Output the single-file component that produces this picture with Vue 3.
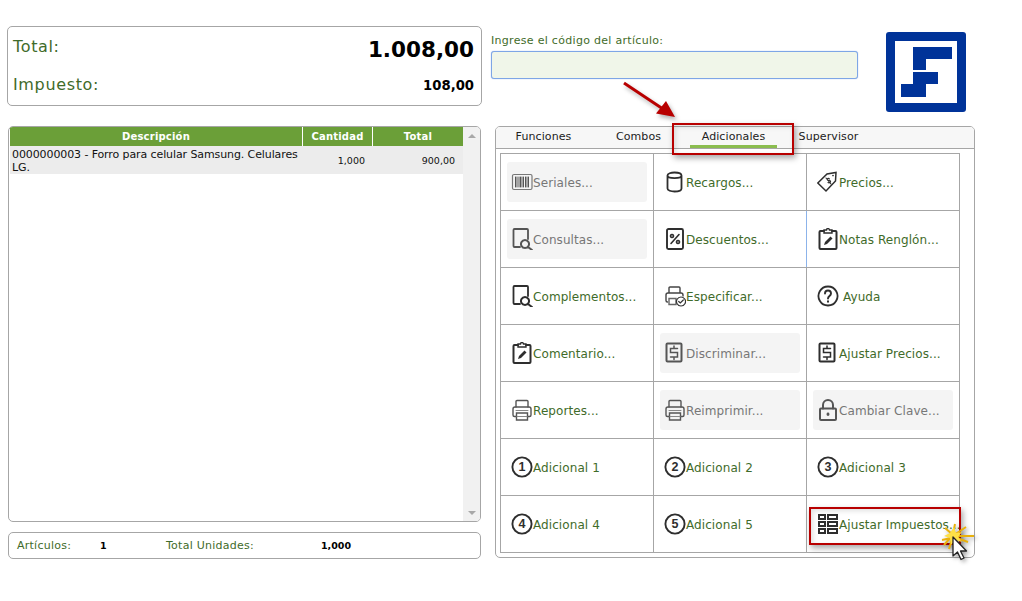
<script setup>
const icons = {
  barcode: [
    { d: 'M3 3.500h16.500a1.500 1.500 0 0 1 1.500 1.500v12a1.500 1.500 0 0 1-1.500 1.500H3A1.500 1.500 0 0 1 1.500 17V5A1.500 1.500 0 0 1 3 3.500z', w: 1.200, c: '#777' },
    { d: 'M4.500 6v10M6 6v10M8 6v10M9.500 6v10M11 6v10M12.500 6v10M14.500 6v10M16 6v10M17.500 6v10', w: 1, c: '#555' },
  ],
  db: [
    { d: 'M3.500 4.500c0-4 14-4 14 0v13c0 4-14 4-14 0zM3.500 4.500c0 3.500 14 3.500 14 0', w: 1.800 },
  ],
  tag: [
    { d: 'M.8 12 10 3l9-1.500-.5 8.500L9 20z', w: 1.500 },
    { d: 'M12.500 8c-1-1.500-3 0-2 1s2.500 0 3 1-1 2.500-2.500 1.500M9 7l5 6', w: 1.100 },
    { d: 'M16 4.500h.01', w: 1.700 },
  ],
  search: [
    { d: 'M9 19H3.500a1 1 0 0 1-1-1V2a1 1 0 0 1 1-1H16a1 1 0 0 1 1 1v9', w: 1.800 },
    { d: 'M14 12a4 4 0 1 0 .01 0zM17 19l4 3', w: 2 },
  ],
  percent: [
    { d: 'M4.500 1h13A1.500 1.500 0 0 1 19 2.500v17a1.500 1.500 0 0 1-1.500 1.500h-13A1.500 1.500 0 0 1 3 19.500v-17A1.500 1.500 0 0 1 4.500 1z', w: 1.900 },
    { d: 'M15 6.500l-8 9M8 6.500a1.500 1.500 0 1 0 .01 0zM14 12.500a1.500 1.500 0 1 0 .01 0z', w: 1.600 },
  ],
  clip: [
    { d: 'M7 3H3.500a1 1 0 0 0-1 1v16a1 1 0 0 0 1 1h15a1 1 0 0 0 1-1V4a1 1 0 0 0-1-1H15', w: 2 },
    { d: 'M7 2h2.500a1.500 1.500 0 0 1 3 0H15v3H7z', w: 1.400 },
    { d: 'M7 17l1-3 5.500-5.500 2 2-5.500 5.500z', f: 1 },
  ],
  printer: [
    { d: 'M5 8V2.500a1 1 0 0 1 1-1h10a1 1 0 0 1 1 1V8', w: 1.400, c: '#555' },
    { d: 'M5 17.500H3.500A1.500 1.500 0 0 1 2 16v-6a2 2 0 0 1 2-2h14a2 2 0 0 1 2 2v6a1.500 1.500 0 0 1-1.500 1.500H17', w: 1.400, c: '#555' },
    { d: 'M5.500 14h11v7h-11z', w: 1.400, c: '#555' },
    { d: 'M6 17.500h10', w: 1, c: '#888' },
    { d: 'M5 11.500h12', w: 1, c: '#888' },
  ],
  printok: [
    { d: 'M5 8V3a1 1 0 0 1 1-1h9a1 1 0 0 1 1 1v5M3.500 17A1.500 1.500 0 0 1 2 15.500V10a2 2 0 0 1 2-2h13a2 2 0 0 1 2 2v1', w: 1.400, c: '#444' },
    { d: 'M5 13.500h7v6H5z', w: 1.400, c: '#666' },
    { d: 'M17 12a4.500 4.500 0 1 0 .01 0zM14.700 16.500l1.600 1.500 3-3', w: 1.200, c: '#333' },
  ],
  dollar: [
    { d: 'M3.500 1.500h13a1 1 0 0 1 1 1v16a1 1 0 0 1-1 1h-13a1 1 0 0 1-1-1v-16a1 1 0 0 1 1-1z', w: 2 },
    { d: 'M13.500 6.500h-7v4h7v4.500h-7M10 4v2.500M10 15v2.500', w: 1.500 },
  ],
  help: [
    { d: 'M11 1.500a9.500 9.500 0 1 0 .01 0z', w: 1.800 },
    { d: 'M8 8.500c0-4 6-4 6 0 0 2.500-3 2.500-3 5', w: 1.900 },
    { d: 'M11 16.300v.5', w: 2 },
  ],
  lock: [
    { d: 'M6 9.500V6a5 5 0 0 1 10 0v3.500', w: 2 },
    { d: 'M4 9.500h14a1 1 0 0 1 1 1V20a1 1 0 0 1-1 1H4a1 1 0 0 1-1-1v-9.500a1 1 0 0 1 1-1z', w: 2 },
    { d: 'M11 15v.5', w: 2.800 },
  ],
  table: [
    { d: 'M2 2h6v4H2zM11 2h9v4h-9zM2 9h6v4H2zM11 9h9v4h-9zM2 16h6v4H2zM11 16h9v4h-9z', w: 2 },
  ],
}

const buttons = [
  { label: 'Seriales...', icon: 'barcode', off: true },
  { label: 'Recargos...', icon: 'db' },
  { label: 'Precios...', icon: 'tag' },
  { label: 'Consultas...', icon: 'search', off: true },
  { label: 'Descuentos...', icon: 'percent' },
  { label: 'Notas Renglón...', icon: 'clip', focus: true },
  { label: 'Complementos...', icon: 'search' },
  { label: 'Especificar...', icon: 'printok' },
  { label: 'Ayuda', icon: 'help', wide: true },
  { label: 'Comentario...', icon: 'clip' },
  { label: 'Discriminar...', icon: 'dollar', off: true },
  { label: 'Ajustar Precios...', icon: 'dollar' },
  { label: 'Reportes...', icon: 'printer' },
  { label: 'Reimprimir...', icon: 'printer', off: true },
  { label: 'Cambiar Clave...', icon: 'lock', off: true },
  { label: 'Adicional 1', num: 1 },
  { label: 'Adicional 2', num: 2 },
  { label: 'Adicional 3', num: 3 },
  { label: 'Adicional 4', num: 4 },
  { label: 'Adicional 5', num: 5 },
  { label: 'Ajustar Impuestos...', icon: 'table' },
]

const tabs = ['Funciones', 'Combos', 'Adicionales', 'Supervisor']
</script>

<template>
  <div class="page">
    <section class="left">
      <div class="totals box">
        <div class="total-row">
          <span class="total-label">Total:</span>
          <b class="total-value">1.008,00</b>
        </div>
        <div class="tax-row">
          <span class="total-label">Impuesto:</span>
          <b class="tax-value">108,00</b>
        </div>
      </div>

      <div class="items box">
        <div class="list">
          <div class="thead">
            <div>Descripción</div>
            <div>Cantidad</div>
            <div>Total</div>
          </div>
          <div class="trow">
            <div class="desc">0000000003 - Forro para celular Samsung. Celulares LG.</div>
            <div class="num">1,000</div>
            <div class="num">900,00</div>
          </div>
        </div>
        <div class="scrollbar">
          <i class="arrow up"></i>
          <i class="arrow down"></i>
        </div>
      </div>

      <div class="summary box">
        <span class="s-a">Artículos:</span>
        <b class="s-b">1</b>
        <span class="s-c">Total Unidades:</span>
        <b>1,000</b>
      </div>
    </section>

    <section class="right">
      <div class="top">
        <div class="code">
          <label class="code-label" for="code">Ingrese el código del artículo:</label>
          <input id="code" class="code-input" type="text" />
        </div>
        <div class="logo">
          <svg width="62" height="62" viewBox="0 0 62 62">
            <path fill="#003399" d="M18 6h39v12H31v11H18zM18 31h25v12H31v13H6V43h12z" />
          </svg>
        </div>
      </div>

      <div class="tabs box">
        <nav class="tabbar">
          <div v-for="t in tabs" :key="t" class="tab" :class="{ active: t === 'Adicionales' }">{{ t }}</div>
        </nav>
        <div class="grid">
          <div v-for="b in buttons" :key="b.label" class="cell" :class="{ focus: b.focus }">
            <div class="btn" :class="{ off: b.off, wide: b.wide }">
              <svg v-if="b.num" class="ico" width="22" height="22" viewBox="0 0 22 22">
                <circle cx="11" cy="11" r="9.600" fill="none" stroke="#2e2e2e" stroke-width="1.900" />
                <text x="11" y="15.200" text-anchor="middle" class="digit">{{ b.num }}</text>
              </svg>
              <svg v-else class="ico" width="22" height="22" viewBox="0 0 22 22">
                <path
                  v-for="(p, i) in icons[b.icon]"
                  :key="i"
                  :d="p.d"
                  :fill="p.f ? (b.off ? '#555' : '#2e2e2e') : 'none'"
                  :stroke="p.f ? 'none' : (p.c || (b.off ? '#555' : '#2e2e2e'))"
                  :stroke-width="p.w"
                  stroke-linecap="round"
                />
              </svg>
              <span class="btn-text">{{ b.label }}</span>
            </div>
          </div>
        </div>
      </div>
    </section>

    <div class="mark mark-tab"></div>
    <div class="mark mark-btn"></div>

    <svg class="arrow-note" width="70" height="50" viewBox="0 0 70 50">
      <path d="M2 2 L44 30" stroke="#b80000" stroke-width="3" fill="none" />
      <path d="M53 36 L34 32.500 L44 20 Z" fill="#b80000" />
    </svg>

    <svg class="pointer" width="44" height="46" viewBox="0 0 44 46">
      <path d="M13 12 6 6M14 12 16 2M15 13 27 5M16 14 35 14M15 15 29 20M12 16 3 18M12 15 5 23M13 17 10 27" stroke="#e9b10c" stroke-width="2" fill="none" />
      <path d="M15 5l2 6 6-1-4 5 4 5-7-2-4 5-1-7-6-2 6-3z" fill="#fde047" />
      <path d="M14 15v19l4.500-4 3.500 7.500 3-1.500-3.500-7h6z" fill="#fff" stroke="#222" stroke-width="1.300" stroke-linejoin="round" />
    </svg>
  </div>
</template>

<style>
html, body { background: #fff; }
</style>

<style scoped>
.page {
  position: relative;
  width: 1022px;
  height: 601px;
  overflow: hidden;
  display: flex;
  padding: 26px 0 0 7px;
  box-sizing: border-box;
  font-family: "DejaVu Sans", Verdana, sans-serif;
  font-size: 11px;
  color: #111;
}
.box {
  border: 1px solid #a6a6a6;
  border-radius: 5px;
  box-sizing: border-box;
  background: #fff;
}
.left {
  width: 475px;
  display: flex;
  flex-direction: column;
  align-items: flex-end;
}
.totals {
  width: 475px;
  height: 80px;
  padding: 9px 7px 0 5px;
}
.total-row, .tax-row {
  display: flex;
  justify-content: space-between;
}
.total-row { height: 37px; align-items: flex-start; }
.tax-row { align-items: center; height: 24px; }
.total-label { font-size: 16px; color: #3f6b2a; line-height: 22px; letter-spacing: .65px; }
.total-value { font-size: 21.500px; line-height: 28px; color: #000; }
.tax-value { font-size: 13.200px; color: #000; }

.items {
  width: 473px;
  height: 396px;
  margin: 20px 1px 0 0;
  display: flex;
  overflow: hidden;
}
.list { width: 454px; padding-left: 1px; }
.thead, .trow {
  display: grid;
  grid-template-columns: 293px 70px 90px;
}
.thead > div {
  background: #6b9f38;
  color: #fff;
  font-weight: 700;
  font-size: 10px;
  letter-spacing: .2px;
  height: 19px;
  line-height: 19px;
  text-align: center;
  border-right: 1px solid #fff;
  box-sizing: border-box;
}
.thead > div:last-child { border-right: 0; }
.trow {
  background: #ececec;
  height: 28px;
  line-height: 13px;
  padding-top: 1.500px;
  box-sizing: border-box;
}
.desc { padding-left: 2px; letter-spacing: -.1px; }
.num {
  font-size: 9.500px;
  text-align: right;
  padding: 6px 8px 0 0;
}
.scrollbar {
  position: relative;
  width: 18px;
  background: #f1f1f1;
}
.arrow {
  position: absolute;
  left: 5px;
  border-left: 4px solid transparent;
  border-right: 4px solid transparent;
}
.arrow.up { top: 7px; border-bottom: 4px solid #a8a8a8; }
.arrow.down { bottom: 6px; border-top: 4px solid #a8a8a8; }

.summary {
  width: 473px;
  height: 27px;
  margin: 10px 1px 0 0;
  display: flex;
  align-items: center;
  padding-left: 8px;
  font-size: 11px;
  letter-spacing: .25px;
}
.summary span { color: #3f6b2a; }
.summary b { font-size: 9.500px; color: #000; letter-spacing: 0; }
.s-a { width: 83px; }
.s-b { width: 66px; }
.s-c { width: 155px; }

.right {
  margin-left: 9px;
  width: 484px;
}
.top {
  display: flex;
  height: 100px;
}
.code {
  padding-top: 8px;
}
.code-label {
  display: block;
  height: 17px;
  line-height: 13px;
  color: #3f6b2a;
  letter-spacing: .3px;
}
.code-input {
  display: block;
  width: 367px;
  height: 28px;
  box-sizing: border-box;
  background: #f0f6e9;
  border: 1px solid #7ea6e6;
  border-radius: 3px;
  box-shadow: 0 0 1px #7ea6e6;
  outline: 0;
  padding: 0;
}
.logo {
  margin: 6px 0 0 28px;
  width: 80px;
  height: 80px;
  box-sizing: border-box;
  background: #003399;
  border-radius: 3px;
  padding: 9px;
}
.logo svg {
  display: block;
  background: #fff;
}
.tabs {
  width: 480px;
  height: 432px;
  margin-left: 4px;
}
.tabbar {
  display: flex;
  height: 21px;
  background: #f7f7f7;
  border-bottom: 1px solid #a6a6a6;
  border-radius: 4px 4px 0 0;
}
.tab {
  position: relative;
  width: 95px;
  text-align: center;
  line-height: 20px;
  color: #222;
  letter-spacing: .1px;
}
.tab.active::after {
  content: "";
  position: absolute;
  left: 4px;
  right: 4px;
  bottom: 0;
  height: 3px;
  background: #8bbd4f;
}
.grid {
  display: grid;
  grid-template-columns: repeat(3, 152px);
  grid-auto-rows: 56px;
  gap: 1px;
  width: 460px;
  height: 400px;
  box-sizing: border-box;
  margin: 4px 0 0 4px;
  padding: 1px;
  background: #a6a6a6;
}
.cell {
  position: relative;
  background: #fff;
  padding: 8px 6px;
}
.cell.focus::before {
  content: "";
  position: absolute;
  left: -1px;
  top: 0;
  bottom: 0;
  width: 1px;
  background: #8cb3ea;
}
.btn {
  display: flex;
  align-items: center;
  height: 40px;
  padding-left: 4px;
  border-radius: 3px;
  font-size: 12px;
  letter-spacing: .08px;
  white-space: nowrap;
  color: #3f6b2a;
}
.btn.off {
  background: #f4f4f4;
  color: #777;
}
.btn-text { padding-top: 2px; }
.btn.wide span { margin-left: 4px; }
.ico { flex: none; }
.digit {
  font-family: "Liberation Sans", Arial, sans-serif;
  font-size: 12.500px;
  font-weight: 700;
  fill: #2e2e2e;
}

.mark {
  position: absolute;
  border: 2px solid #b80000;
  box-shadow: 2px 3px 6px rgba(0, 0, 0, .35), inset 2px 2px 5px rgba(0, 0, 0, .12);
  box-sizing: border-box;
  pointer-events: none;
}
.mark-tab { left: 672px; top: 123px; width: 122px; height: 32px; }
.mark-btn { left: 809px; top: 507px; width: 152px; height: 38px; }
.arrow-note {
  position: absolute;
  left: 622px;
  top: 81px;
  filter: drop-shadow(2px 3px 2px rgba(0, 0, 0, .3));
}
.pointer {
  position: absolute;
  left: 939px;
  top: 522px;
  filter: drop-shadow(2px 2px 2px rgba(0, 0, 0, .35));
}
</style>
